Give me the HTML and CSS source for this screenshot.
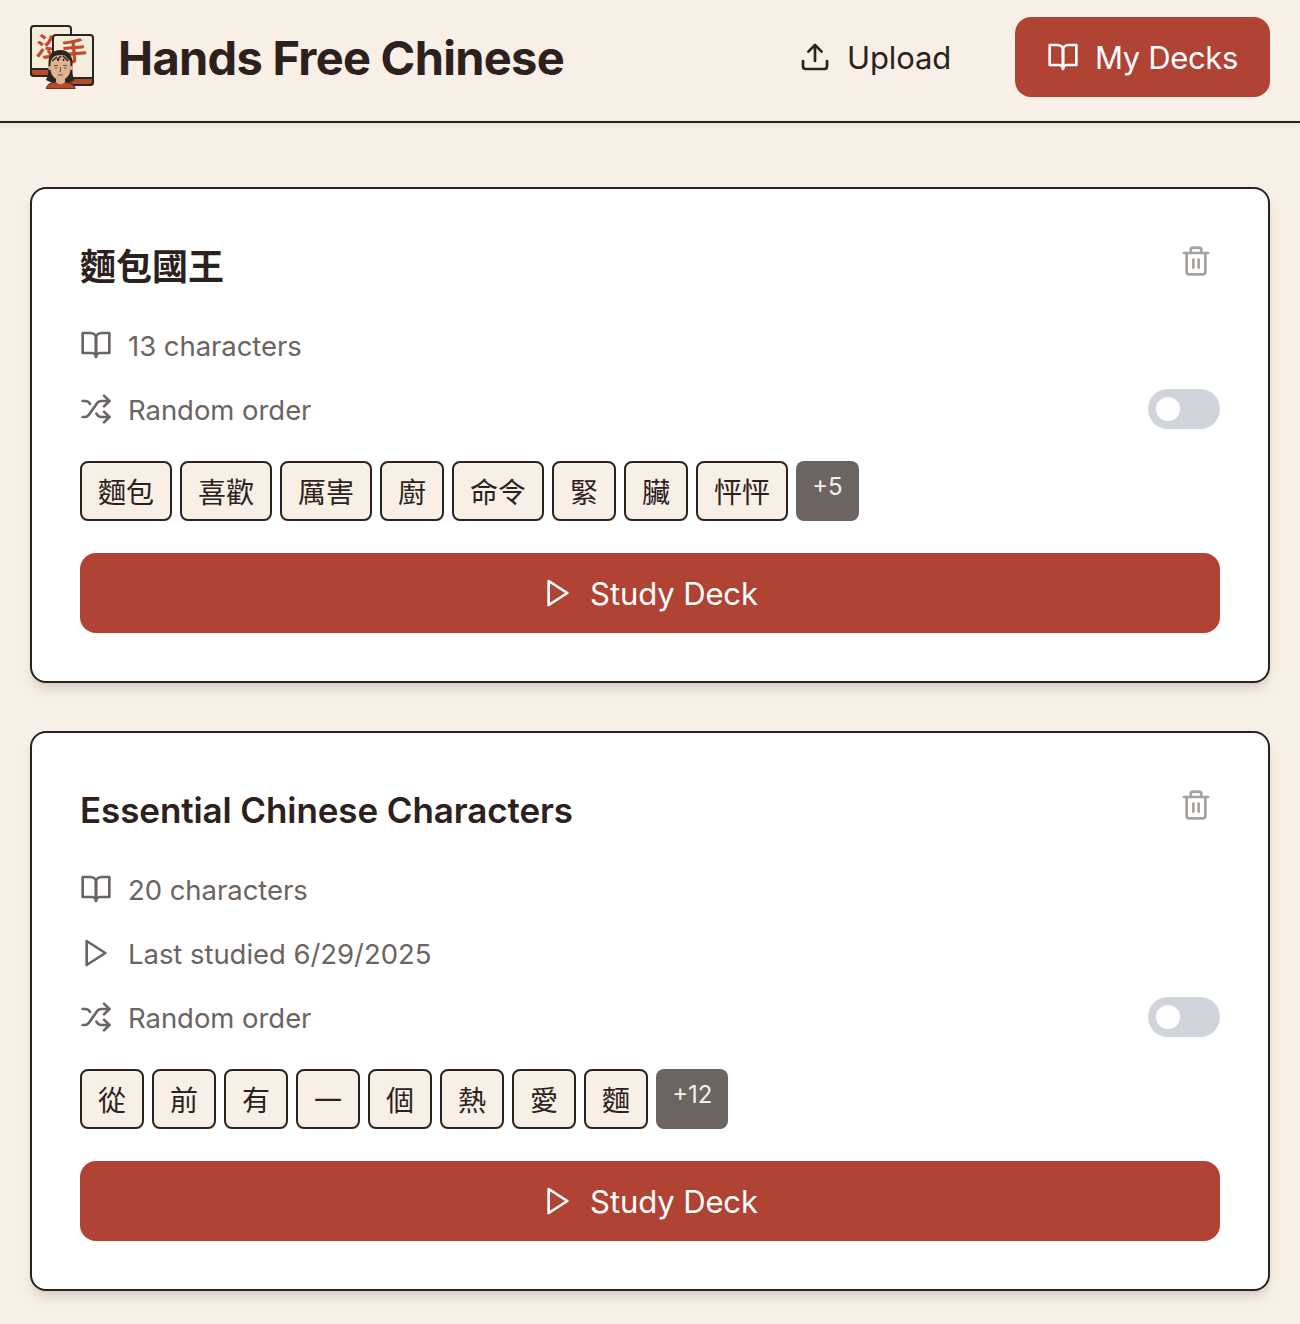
FILE: index.html
```html
<!DOCTYPE html>
<html lang="en">
<head>
    <meta charset="UTF-8">
    <meta name="viewport" content="width=device-width, initial-scale=1.0">
    <title>Hands Free Chinese</title>
    <link rel="stylesheet" href="styles.css">
</head>
<body>
    <!-- shared icons -->
    <svg class="sprite">
        <symbol id="icon-book" viewBox="0 0 24 24">
            <path d="M2 3h6a4 4 0 0 1 4 4v14a3 3 0 0 0-3-3H2z"/>
            <path d="M22 3h-6a4 4 0 0 0-4 4v14a3 3 0 0 1 3-3h7z"/>
        </symbol>
        <symbol id="icon-play" viewBox="0 0 24 24">
            <polygon points="5 3 19 12 5 21 5 3"/>
        </symbol>
        <symbol id="icon-shuffle" viewBox="0 0 24 24">
            <path d="M2 18h1.4c1.3 0 2.5-.6 3.3-1.7l6.1-8.6c.7-1.1 2-1.7 3.3-1.7H22"/>
            <path d="m18 2 4 4-4 4"/>
            <path d="M2 6h1.9c1.5 0 2.9.9 3.6 2.2"/>
            <path d="M22 18h-5.9c-1.3 0-2.6-.7-3.3-1.8l-.5-.8"/>
            <path d="m18 14 4 4-4 4"/>
        </symbol>
        <symbol id="icon-trash" viewBox="0 0 24 24">
            <path d="M3 6h18"/>
            <path d="M19 6v14a2 2 0 0 1-2 2H7a2 2 0 0 1-2-2V6"/>
            <path d="M8 6V4a2 2 0 0 1 2-2h4a2 2 0 0 1 2 2v2"/>
            <path d="M10 11v6M14 11v6"/>
        </symbol>
        <symbol id="icon-upload" viewBox="0 0 24 24">
            <path d="M21 15v4a2 2 0 0 1-2 2H5a2 2 0 0 1-2-2v-4"/>
            <path d="M17 8l-5-5-5 5M12 3v12"/>
        </symbol>
    </svg>

    <header class="header">
        <div class="brand">
            <svg class="logo" viewBox="0 0 64 64">
                <rect class="tile-face" x="1" y="1" width="40" height="50" rx="3"/>
                <path class="tile-base" d="M1 44h40v4a3 3 0 0 1-3 3H4a3 3 0 0 1-3-3z"/>
                <text class="logo-char" x="6" y="32" transform="rotate(8 18 22)">沒</text>
                <rect class="tile-face" x="23" y="10" width="40" height="50" rx="3"/>
                <path class="tile-base" d="M23 53h40v4a3 3 0 0 1-3 3H26a3 3 0 0 1-3-3z"/>
                <text class="logo-char" x="31" y="36" transform="rotate(-5 43 28)">手</text>
                <path class="hair" d="M30.5 25C22 25 18.5 31 18.5 38c0 8 0 12-2.5 17 3 2 7 3 11 3h8c4 0 7-1 9.500-3-2.500-5-2-9-2-17 0-7-4-13-12-13z"/>
                <path class="shirt" d="M16.5 64c0-4 3-6 9-7l5 1.5 5-1.500c6 1 9.500 3 9.500 7z"/>
                <path class="skin" d="M26 50h9v7c-2 3-7 3-9 0z"/>
                <circle class="skin" cx="20" cy="43" r="2"/>
                <circle class="skin" cx="41" cy="43" r="2"/>
                <path class="skin" d="M20.5 39c0-6 4-9 10-9s10 3 10 9v5c0 6-4.500 11-10 11s-10-5-10-11z"/>
                <path class="hair-line" d="M22 36l5-4M27 35l4-4M33 31l5 5M36 31l4 4M29 34l-1 2M33 34l1 2"/>
                <path class="face-line" d="M24 40.500h4M33 40.500h4M25 43h2.500M34 43h2.500M30.500 42v4.500h-1M28 50h5"/>
            </svg>
            <h1>Hands Free Chinese</h1>
        </div>
        <nav class="nav">
            <a class="nav-link"><svg class="icon"><use href="#icon-upload"/></svg><span>Upload</span></a>
            <a class="nav-link active"><svg class="icon"><use href="#icon-book"/></svg><span>My Decks</span></a>
        </nav>
    </header>

    <main class="decks">
        <section class="deck">
            <div class="deck-top">
                <h2 class="zh">麵包國王</h2>
                <button class="delete" aria-label="Delete deck"><svg class="icon"><use href="#icon-trash"/></svg></button>
            </div>
            <div class="deck-info">
                <div class="row"><svg class="icon"><use href="#icon-book"/></svg><span>13 characters</span></div>
                <div class="row"><svg class="icon"><use href="#icon-shuffle"/></svg><span>Random order</span><button class="toggle" aria-label="Random order"></button></div>
            </div>
            <div class="chips">
                <span class="chip">麵包</span>
                <span class="chip">喜歡</span>
                <span class="chip">厲害</span>
                <span class="chip">廚</span>
                <span class="chip">命令</span>
                <span class="chip">緊</span>
                <span class="chip">臟</span>
                <span class="chip">怦怦</span>
                <span class="chip-more">+5</span>
            </div>
            <button class="study"><svg class="icon"><use href="#icon-play"/></svg><span>Study Deck</span></button>
        </section>

        <section class="deck">
            <div class="deck-top">
                <h2>Essential Chinese Characters</h2>
                <button class="delete" aria-label="Delete deck"><svg class="icon"><use href="#icon-trash"/></svg></button>
            </div>
            <div class="deck-info">
                <div class="row"><svg class="icon"><use href="#icon-book"/></svg><span>20 characters</span></div>
                <div class="row"><svg class="icon"><use href="#icon-play"/></svg><span>Last studied 6/29/2025</span></div>
                <div class="row"><svg class="icon"><use href="#icon-shuffle"/></svg><span>Random order</span><button class="toggle" aria-label="Random order"></button></div>
            </div>
            <div class="chips">
                <span class="chip">從</span>
                <span class="chip">前</span>
                <span class="chip">有</span>
                <span class="chip">一</span>
                <span class="chip">個</span>
                <span class="chip">熱</span>
                <span class="chip">愛</span>
                <span class="chip">麵</span>
                <span class="chip-more">+12</span>
            </div>
            <button class="study"><svg class="icon"><use href="#icon-play"/></svg><span>Study Deck</span></button>
        </section>
    </main>
</body>
</html>
```
FILE: styles.css
```css
* {
    box-sizing: border-box;
}
body {
    margin: 0;
    background: #f8f0e6;
    color: #2c211d;
    font-family: Inter, "Noto Sans CJK TC", sans-serif;
}
h1, h2 {
    margin: 0;
}
button {
    border: none;
    font-family: inherit;
    cursor: pointer;
}
.sprite {
    display: none;
}
.icon {
    width: 32px;
    height: 32px;
    flex-shrink: 0;
    fill: none;
    stroke: currentColor;
    stroke-width: 2;
    stroke-linecap: round;
    stroke-linejoin: round;
}
.header {
    height: 123px;
    padding: 17px 30px 0;
    display: flex;
    justify-content: space-between;
    align-items: flex-start;
    border-bottom: 2px solid #2c211d;
    box-shadow: 0 2px 4px rgba(0, 0, 0, 0.05);
}
.brand {
    display: flex;
    align-items: center;
    gap: 24px;
    height: 80px;
}
.brand h1 {
    font-size: 47px;
    font-weight: 700;
    line-height: 64px;
    letter-spacing: -0.72px;
    padding-top: 2px;
}
.logo {
    width: 64px;
    height: 64px;
}
.tile-face {
    fill: #f5eddc;
    stroke: #29261f;
    stroke-width: 2;
}
.tile-base {
    fill: #b84a2a;
    stroke: #29261f;
    stroke-width: 2;
}
.logo-char {
    font-family: "Noto Sans CJK TC", sans-serif;
    font-size: 26px;
    font-weight: 700;
    fill: #c14a2c;
}
.hair {
    fill: #29261f;
}
.shirt {
    fill: #b84a2a;
    stroke: #29261f;
}
.skin {
    fill: #dfb293;
}
.hair-line {
    fill: none;
    stroke: #29261f;
    stroke-width: 1.5;
}
.face-line {
    fill: none;
    stroke: #6b4936;
}
.nav {
    display: flex;
    gap: 32px;
}
.nav-link {
    display: flex;
    align-items: center;
    gap: 16px;
    height: 80px;
    padding: 0 32px;
    border-radius: 16px;
    font-size: 31px;
    letter-spacing: -0.15px;
}
.nav-link span, .study span {
    padding-top: 1px;
}
.nav-link.active {
    background: #b04333;
    color: white;
    letter-spacing: -0.35px;
}
.decks {
    padding: 64px 30px 32px;
    display: flex;
    flex-direction: column;
    gap: 48px;
}
.deck {
    padding: 48px;
    background: white;
    border: 2px solid #2c211d;
    border-radius: 16px;
    box-shadow: 0 8px 12px -2px rgba(0, 0, 0, 0.1), 0 4px 8px -4px rgba(0, 0, 0, 0.1);
}
.deck-top {
    display: flex;
    justify-content: space-between;
    align-items: flex-start;
    margin-bottom: 32px;
}
.deck h2 {
    font-size: 35px;
    font-weight: 600;
    line-height: 56px;
    letter-spacing: -0.1px;
    padding-top: 1px;
    height: 56px;
}
.deck h2.zh {
    font-size: 36px;
    letter-spacing: 0;
    padding-top: 2px;
}
.delete {
    padding: 8px;
    height: 48px;
    background: none;
    color: #a8a29e;
}
.deck-info {
    display: flex;
    flex-direction: column;
    gap: 24px;
}
.row {
    display: flex;
    align-items: center;
    gap: 16px;
    height: 40px;
    color: #6b6461;
    font-size: 27.5px;
    letter-spacing: -0.05px;
}
.row span {
    padding-top: 2px;
}
.toggle {
    width: 72px;
    height: 40px;
    margin-left: auto;
    padding: 8px;
    border-radius: 20px;
    background: #d1d5db;
}
.toggle::before {
    content: "";
    display: block;
    width: 24px;
    height: 24px;
    border-radius: 50%;
    background: white;
}
.chips {
    display: flex;
    gap: 8px;
    margin: 32px 0;
}
.chip {
    height: 60px;
    padding: 0 16px;
    border: 2px solid #2c211d;
    border-radius: 8px;
    background: #f8f0e6;
    font-family: "Noto Sans CJK TC", sans-serif;
    font-size: 28px;
    line-height: 56px;
}
.chip-more {
    padding: 10px 16px;
    border-radius: 8px;
    background: #6b6461;
    color: #f8f0e6;
    font-size: 24px;
    line-height: 32px;
}
.study {
    display: flex;
    align-items: center;
    justify-content: center;
    gap: 16px;
    width: 100%;
    height: 80px;
    border-radius: 16px;
    background: #b04333;
    color: white;
    font-size: 31px;
    letter-spacing: -0.1px;
}
```
